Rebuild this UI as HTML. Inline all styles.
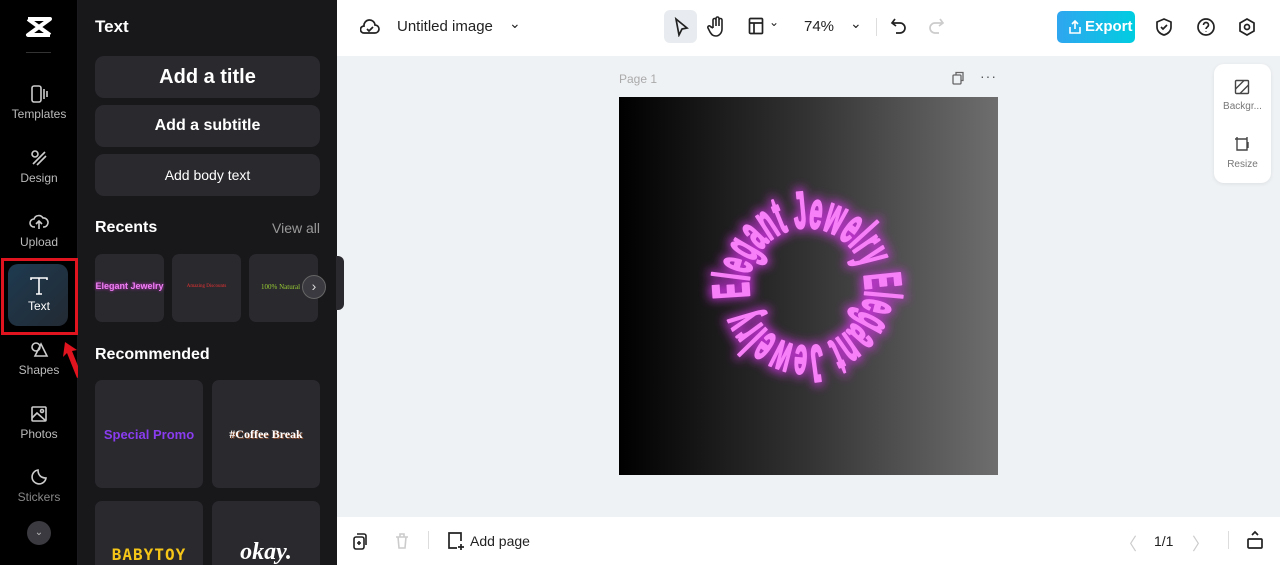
<!DOCTYPE html>
<html><head><meta charset="utf-8"><style>
*{box-sizing:border-box;margin:0;padding:0}
html,body{width:1280px;height:565px;overflow:hidden}
body{font-family:"Liberation Sans",sans-serif;background:#eff2f5;position:relative}
.rail{position:absolute;left:0;top:0;width:78px;height:565px;background:#000;border-right:1px solid #1b1b1f}
.ri{position:absolute;left:0;width:78px;text-align:center;color:#bbb;font-size:12px}
.ri svg{display:block;margin:0 auto 3px}
.panel{position:absolute;left:78px;top:0;width:259px;height:565px;background:#18181b;overflow:hidden}
.btn{position:absolute;left:17px;width:225px;height:42px;border-radius:9px;background:#29292e;color:#fff;font-weight:bold;text-align:center}
.card{position:absolute;background:#29292e;border-radius:7px}
.top{position:absolute;left:337px;top:0;width:943px;height:56px;background:#fff}
.bot{position:absolute;left:337px;top:517px;width:943px;height:48px;background:#fff}
</style></head><body>
<div class="rail">
 <svg style="position:absolute;left:25px;top:16px" width="28" height="22" viewBox="0 0 28 22"><path d="M3 3h22L3 19h22M3 3l22 16" stroke="#fff" stroke-width="4" fill="none" stroke-linejoin="round"/></svg>
 <div style="position:absolute;left:26px;top:52px;width:25px;height:1px;background:#333"></div>
 <div class="ri" style="top:84px"><svg width="20" height="20" viewBox="0 0 20 20" fill="none" stroke="#ccc" stroke-width="1.6"><rect x="3" y="2" width="9" height="16" rx="2"/><path d="M15 5v10M18 7v6"/></svg>Templates</div>
 <div class="ri" style="top:148px"><svg width="20" height="20" viewBox="0 0 20 20" fill="none" stroke="#ccc" stroke-width="1.6"><circle cx="6" cy="6" r="3"/><path d="M4 16l12-12M8 17l9-9"/></svg>Design</div>
 <div class="ri" style="top:212px"><svg width="20" height="20" viewBox="0 0 20 20" fill="none" stroke="#ccc" stroke-width="1.6"><path d="M6 15H5a4 4 0 010-8 5 5 0 019-1 4 4 0 011 9h-1M10 17V9M7 12l3-3 3 3"/></svg>Upload</div>
 <div style="position:absolute;left:1px;top:258px;width:77px;height:77px;border:3px solid #e0141e"></div>
 <div style="position:absolute;left:8px;top:264px;width:60px;height:62px;border-radius:10px;background:linear-gradient(135deg,#1e3a50,#222a33)"></div>
 <div class="ri" style="top:276px;color:#fff"><svg width="22" height="20" viewBox="0 0 22 20" fill="none" stroke="#fff" stroke-width="1.6"><path d="M3 4V2h16v2M11 2v16M8 18h6"/></svg>Text</div>
 <svg style="position:absolute;left:62px;top:340px" width="24" height="40" viewBox="0 0 24 40"><path d="M3 2l12 8-5 1 10 25-5 2-10-25-4 4z" fill="#e0141e"/></svg>
 <div class="ri" style="top:340px"><svg width="20" height="20" viewBox="0 0 20 20" fill="none" stroke="#ccc" stroke-width="1.6"><circle cx="7" cy="7" r="4"/><path d="M12 4l6 12H6z"/></svg>Shapes</div>
 <div class="ri" style="top:404px"><svg width="20" height="20" viewBox="0 0 20 20" fill="none" stroke="#ccc" stroke-width="1.6"><rect x="3" y="3" width="14" height="14" rx="1"/><path d="M3 14l5-5 9 8"/><circle cx="13" cy="7" r="1.5"/></svg>Photos</div>
 <div class="ri" style="top:467px;color:#888"><svg width="20" height="20" viewBox="0 0 20 20" fill="none" stroke="#ccc" stroke-width="1.6"><path d="M17 11a7 7 0 11-8-8c0 5 3 8 8 8z"/></svg>Stickers</div>
 <div style="position:absolute;left:27px;top:521px;width:24px;height:24px;border-radius:50%;background:#3a3a40;color:#bbb;font-size:10px;text-align:center;line-height:24px">⌄</div>
</div>
<div class="panel">
 <div style="position:absolute;left:17px;top:17px;color:#fff;font-weight:bold;font-size:17px">Text</div>
 <div class="btn" style="top:56px;line-height:42px;font-size:20px">Add a title</div>
 <div class="btn" style="top:105px;line-height:42px;font-size:16px">Add a subtitle</div>
 <div class="btn" style="top:154px;line-height:42px;font-size:14px;font-weight:normal">Add body text</div>
 <div style="position:absolute;left:17px;top:219px;color:#fff;font-weight:bold;font-size:16px">Recents</div>
 <div style="position:absolute;right:17px;top:220px;color:#999;font-size:14px">View all</div>
 <div class="card" style="left:17px;top:254px;width:69px;height:68px"><div style="margin-top:27px;text-align:center;white-space:nowrap;color:#f07ef5;font-size:9px;font-family:'Liberation Sans Narrow',sans-serif;font-weight:bold;text-shadow:0 0 3px #c3c">Elegant Jewelry</div></div>
 <div class="card" style="left:94px;top:254px;width:69px;height:68px"><div style="margin-top:30px;text-align:center;color:#e33;font-size:5px;font-family:'Liberation Serif',serif">Amazing Discounts</div></div>
 <div class="card" style="left:171px;top:254px;width:69px;height:68px;overflow:hidden"><div style="margin-top:29px;padding-left:12px;white-space:nowrap;color:#9c3;font-size:7px;font-family:'Liberation Serif',serif">100% Natural</div></div>
 <div style="position:absolute;left:224px;top:275px;width:24px;height:24px;border-radius:50%;background:#3a3a40;border:1px solid #666;color:#ddd;text-align:center;line-height:21px;font-size:14px">›</div>
 <div style="position:absolute;left:17px;top:346px;color:#fff;font-weight:bold;font-size:16px">Recommended</div>
 <div class="card" style="left:17px;top:380px;width:108px;height:108px"><div style="margin-top:47px;text-align:center;color:#8a3cf0;font-weight:bold;font-size:13px">Special Promo</div></div>
 <div class="card" style="left:134px;top:380px;width:108px;height:108px"><div style="margin-top:47px;text-align:center;color:#fff;font-weight:bold;font-size:12px;font-family:'Liberation Serif',serif;text-shadow:1px 1px 0 #8a4a2a">#Coffee Break</div></div>
 <div class="card" style="left:17px;top:501px;width:108px;height:80px"><div style="margin-top:44px;text-align:center;color:#f5c518;font-weight:bold;font-size:16px;letter-spacing:1px;font-family:'DejaVu Sans Mono',monospace">BABYTOY</div></div>
 <div class="card" style="left:134px;top:501px;width:108px;height:80px"><div style="margin-top:38px;text-align:center;color:#fff;font-weight:bold;font-style:italic;font-size:24px;font-family:'Liberation Serif',serif">okay.</div></div>
</div>
<div style="position:absolute;left:336px;top:256px;width:8px;height:54px;background:#2a2a2e;border-radius:0 6px 6px 0"></div>
<div class="top">
 <svg style="position:absolute;left:23px;top:18px" width="20" height="18" viewBox="0 0 20 18" fill="none" stroke="#222" stroke-width="1.7"><path d="M5 15H4a3.5 3.5 0 010-7 5.5 5.5 0 0111-1 4 4 0 010 8H5zM7 11l2 2 4-4"/></svg>
 <div style="position:absolute;left:60px;top:18px;font-size:15px;color:#222">Untitled image</div>
 <div style="position:absolute;left:172px;top:15px;font-size:14px;color:#222">⌄</div>
 <div style="position:absolute;left:327px;top:10px;width:33px;height:33px;border-radius:6px;background:#e8ebef"></div>
 <svg style="position:absolute;left:335px;top:17px" width="18" height="20" viewBox="0 0 18 20" fill="none" stroke="#222" stroke-width="1.7"><path d="M4 2l11 9-5 1-3 6z"/></svg>
 <svg style="position:absolute;left:370px;top:16px" width="20" height="22" viewBox="0 0 20 22" fill="none" stroke="#222" stroke-width="1.6"><path d="M6 12V4a1.5 1.5 0 013 0v6V2.5a1.5 1.5 0 013 0V10V4a1.5 1.5 0 013 0v9c0 4-3 7-6 7s-4-1-6-4l-2-4a1.4 1.4 0 012.5-1.4L6 12"/></svg>
 <svg style="position:absolute;left:411px;top:17px" width="16" height="18" viewBox="0 0 16 18" fill="none" stroke="#222" stroke-width="1.7"><rect x="1.5" y="1.5" width="13" height="15" rx="1"/><path d="M1.5 6h13M6 6v10.5"/></svg>
 <div style="position:absolute;left:432px;top:15px;font-size:12px;color:#222">⌄</div>
 <div style="position:absolute;left:467px;top:18px;font-size:15px;color:#222">74%</div>
 <div style="position:absolute;left:513px;top:15px;font-size:14px;color:#222">⌄</div>
 <div style="position:absolute;left:539px;top:18px;width:1px;height:18px;background:#ddd"></div>
 <svg style="position:absolute;left:553px;top:17px" width="18" height="20" viewBox="0 0 18 20" fill="none" stroke="#222" stroke-width="1.7"><path d="M5 2L2 6l4 3M2 6h8a5 5 0 010 10H6"/></svg>
 <svg style="position:absolute;left:590px;top:17px" width="18" height="20" viewBox="0 0 18 20" fill="none" stroke="#ccc" stroke-width="1.7"><path d="M13 2l3 4-4 3M16 6H8a5 5 0 000 10h4"/></svg>
 <div style="position:absolute;left:720px;top:11px;width:78px;height:32px;border-radius:5px;background:linear-gradient(90deg,#2fa6f0,#00cde0);color:#fff;font-weight:bold;font-size:15px;line-height:32px;padding-left:28px">Export</div>
 <svg style="position:absolute;left:731px;top:19px" width="14" height="16" viewBox="0 0 14 16" fill="none" stroke="#fff" stroke-width="1.6"><path d="M7 10V2M4 5l3-3 3 3M2 8v6h10V8"/></svg>
 <svg style="position:absolute;left:818px;top:17px" width="18" height="20" viewBox="0 0 18 20" fill="none" stroke="#222" stroke-width="1.7"><path d="M9 2l7 3v5c0 4-3 7-7 8-4-1-7-4-7-8V5zM6 10l2 2 4-4"/></svg>
 <svg style="position:absolute;left:859px;top:17px" width="20" height="20" viewBox="0 0 20 20" fill="none" stroke="#222" stroke-width="1.7"><circle cx="10" cy="10" r="8"/><path d="M7.5 8a2.5 2.5 0 115 0c0 2-2.5 2-2.5 4M10 14.5v.5"/></svg>
 <svg style="position:absolute;left:900px;top:17px" width="20" height="20" viewBox="0 0 20 20" fill="none" stroke="#222" stroke-width="1.7"><path d="M10 2l7 4v8l-7 4-7-4V6z"/><circle cx="10" cy="10" r="2.5"/></svg>
</div>
<div style="position:absolute;left:619px;top:72px;font-size:12px;color:#aaa">Page 1</div>
<svg style="position:absolute;left:951px;top:71px" width="14" height="14" viewBox="0 0 14 14" fill="none" stroke="#666" stroke-width="1.3"><rect x="2" y="4" width="8" height="9" rx="1"/><path d="M5 4V1.5h7v8h-2"/></svg>
<div style="position:absolute;left:980px;top:68px;font-size:14px;color:#555;letter-spacing:1px">···</div>
<div style="position:absolute;left:1214px;top:64px;width:57px;height:119px;background:#fff;border-radius:10px;box-shadow:0 1px 4px rgba(0,0,0,.08)"></div>
<svg style="position:absolute;left:1234px;top:79px" width="16" height="16" viewBox="0 0 16 16" fill="none" stroke="#444" stroke-width="1.4"><rect x="1.5" y="1.5" width="13" height="13" rx="1"/><path d="M1.5 10l8.5-8.5M6 14.5l8.5-8.5"/></svg>
<div style="position:absolute;left:1214px;top:101px;width:57px;text-align:center;font-size:10px;color:#777">Backgr...</div>
<svg style="position:absolute;left:1234px;top:136px" width="16" height="16" viewBox="0 0 16 16" fill="none" stroke="#444" stroke-width="1.4"><path d="M3 1v13h10V3H1M13 1v2M14 6v6"/></svg>
<div style="position:absolute;left:1214px;top:159px;width:57px;text-align:center;font-size:10px;color:#777">Resize</div>
<div style="position:absolute;left:619px;top:97px;width:379px;height:378px;background:linear-gradient(90deg,#000 0%,#1a1a1a 25%,#333 50%,#555 78%,#6e6e6e 100%)"></div>
<svg style="position:absolute;left:619px;top:97px" width="379" height="378" viewBox="0 0 379 378">
 <defs>
 <filter id="bl" filterUnits="userSpaceOnUse" x="0" y="0" width="379" height="378"><feGaussianBlur stdDeviation="5"/></filter>
 <path id="cp" d="M130.9 200.1A58 58 0 1 1 245.1 179.9A58 58 0 1 1 130.9 200.1" fill="none"/></defs>
 <g font-family="'Liberation Sans Narrow','Liberation Sans',sans-serif" font-weight="bold" font-size="52">
 <text filter="url(#bl)" fill="#d530e8" stroke="#d530e8" stroke-width="8" textLength="358" lengthAdjust="spacingAndGlyphs" opacity="0.85"><textPath href="#cp">Elegant Jewelry Elegant Jewelry</textPath></text>
 <text fill="#f77ff7" stroke="#f77ff7" stroke-width="2.2" stroke-linejoin="round" textLength="358" lengthAdjust="spacingAndGlyphs"><textPath href="#cp">Elegant Jewelry Elegant Jewelry</textPath></text>
 </g>
</svg>
<div class="bot">
 <svg style="position:absolute;left:15px;top:15px" width="16" height="18" viewBox="0 0 16 18" fill="none" stroke="#222" stroke-width="1.6"><rect x="2" y="5" width="10" height="12" rx="2"/><path d="M5 2h7a2 2 0 012 2v9M7 9v4M5 11h4"/></svg>
 <svg style="position:absolute;left:57px;top:15px" width="16" height="18" viewBox="0 0 16 18" fill="none" stroke="#ccc" stroke-width="1.6"><path d="M2 5h12M4 5l1 11h6l1-11M6 5V2h4v3"/></svg>
 <div style="position:absolute;left:91px;top:14px;width:1px;height:18px;background:#ddd"></div>
 <svg style="position:absolute;left:109px;top:14px" width="20" height="20" viewBox="0 0 20 20" fill="none" stroke="#222" stroke-width="1.7"><path d="M11 17H3V2h12v8M15 13v6M12 16h6"/></svg>
 <div style="position:absolute;left:133px;top:16px;font-size:14px;color:#222">Add page</div>
 <div style="position:absolute;left:783px;top:13px;font-size:17px;color:#ccc">〈</div>
 <div style="position:absolute;left:817px;top:16px;font-size:14px;color:#222">1/1</div>
 <div style="position:absolute;left:855px;top:13px;font-size:17px;color:#ccc">〉</div>
 <div style="position:absolute;left:891px;top:14px;width:1px;height:18px;background:#ddd"></div>
 <svg style="position:absolute;left:909px;top:13px" width="18" height="20" viewBox="0 0 18 20" fill="none" stroke="#222" stroke-width="1.7"><rect x="2" y="9" width="14" height="9" rx="1"/><path d="M6 5l3-3 3 3"/></svg>
</div>
</body></html>
